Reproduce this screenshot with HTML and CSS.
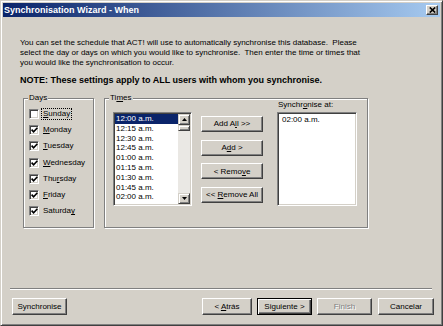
FILE: index.html
```html
<!DOCTYPE html>
<html lang="en">
<head>
    <meta charset="UTF-8" />
    <title>Synchronisation Wizard - When</title>
    <link rel="stylesheet" href="styles.css">
</head>
<body>

    <div class="ventana">
        <div class="barra-titulo">
            <span>Synchronisation Wizard - When</span>
            <span class="cerrar">
                <svg width="7" height="6" viewBox="0 0 7 6"><path d="M0.8 0.5 L6.2 5.5 M6.2 0.5 L0.8 5.5" stroke="#000" stroke-width="1.7"/></svg>
            </span>
        </div>

        <div class="contenido">
            <p class="intro">You can set the schedule that ACT! will use to automatically synchronise this database.&nbsp; Please<br>select the day or days on which you would like to synchronise.&nbsp; Then enter the time or times that<br>you would like the synchronisation to occur.</p>
            <p class="nota">NOTE: These settings apply to ALL users with whom you synchronise.</p>

            <div class="grupos">
                <div class="grupo dias">
                    <span class="titulo-grupo">Days</span>
                    <div class="lista-dias">
                        <div class="dia"><span class="caja"></span><span class="etiqueta foco"><u>S</u>unday</span></div>
                        <div class="dia"><span class="caja"><svg width="7" height="6" viewBox="0 0 7 6"><path d="M0.6 2.6 L2.6 4.8 L6.4 0.8" fill="none" stroke="#000" stroke-width="1.6"/></svg></span><span class="etiqueta"><u>M</u>onday</span></div>
                        <div class="dia"><span class="caja"><svg width="7" height="6" viewBox="0 0 7 6"><path d="M0.6 2.6 L2.6 4.8 L6.4 0.8" fill="none" stroke="#000" stroke-width="1.6"/></svg></span><span class="etiqueta"><u>T</u>uesday</span></div>
                        <div class="dia"><span class="caja"><svg width="7" height="6" viewBox="0 0 7 6"><path d="M0.6 2.6 L2.6 4.8 L6.4 0.8" fill="none" stroke="#000" stroke-width="1.6"/></svg></span><span class="etiqueta"><u>W</u>ednesday</span></div>
                        <div class="dia"><span class="caja"><svg width="7" height="6" viewBox="0 0 7 6"><path d="M0.6 2.6 L2.6 4.8 L6.4 0.8" fill="none" stroke="#000" stroke-width="1.6"/></svg></span><span class="etiqueta">Thu<u>r</u>sday</span></div>
                        <div class="dia"><span class="caja"><svg width="7" height="6" viewBox="0 0 7 6"><path d="M0.6 2.6 L2.6 4.8 L6.4 0.8" fill="none" stroke="#000" stroke-width="1.6"/></svg></span><span class="etiqueta"><u>F</u>riday</span></div>
                        <div class="dia"><span class="caja"><svg width="7" height="6" viewBox="0 0 7 6"><path d="M0.6 2.6 L2.6 4.8 L6.4 0.8" fill="none" stroke="#000" stroke-width="1.6"/></svg></span><span class="etiqueta">Saturda<u>y</u></span></div>
                    </div>
                </div>

                <div class="grupo horas">
                    <span class="titulo-grupo">Ti<u>m</u>es</span>
                    <div class="fila-horas">
                        <div class="hundido lista-horas">
                            <div class="items">
                                <div class="item sel">12:00 a.m.</div>
                                <div class="item">12:15 a.m.</div>
                                <div class="item">12:30 a.m.</div>
                                <div class="item">12:45 a.m.</div>
                                <div class="item">01:00 a.m.</div>
                                <div class="item">01:15 a.m.</div>
                                <div class="item">01:30 a.m.</div>
                                <div class="item">01:45 a.m.</div>
                                <div class="item">02:00 a.m.</div>
                            </div>
                            <div class="scroll">
                                <span class="scroll-btn"><svg width="5" height="3" viewBox="0 0 5 3"><path d="M0 3 L2.5 0 L5 3 Z" fill="#000"/></svg></span>
                                <span class="scroll-pulgar"></span>
                                <span class="scroll-pista"></span>
                                <span class="scroll-btn"><svg width="5" height="3" viewBox="0 0 5 3"><path d="M0 0 L2.5 3 L5 0 Z" fill="#000"/></svg></span>
                            </div>
                        </div>

                        <div class="botones-mover">
                            <button class="boton">Add A<u>l</u>l &gt;&gt;</button>
                            <button class="boton">A<u>d</u>d &gt;</button>
                            <button class="boton">&lt; Remo<u>v</u>e</button>
                            <button class="boton">&lt;&lt; <u>R</u>emove All</button>
                        </div>

                        <div class="sincronizar-en">
                            <span class="etiqueta-lista">Synchr<u>o</u>nise at:</span>
                            <div class="hundido lista-sinc">
                                <div class="item">02:00 a.m.</div>
                            </div>
                        </div>
                    </div>
                </div>
            </div>
        </div>

        <div class="separador"></div>

        <div class="pie">
            <button class="boton">Synchronise</button>
            <button class="boton atras">&lt; <u>A</u>trás</button>
            <button class="boton siguiente">Siguiente &gt;</button>
            <button class="boton finalizar">Finish</button>
            <button class="boton cancelar">Cancelar</button>
        </div>
    </div>

</body>
</html>
```

FILE: styles.css
```css
body {
    margin: 0;
    font-family: "Liberation Sans", Arial, sans-serif;
    font-size: 8px;
    color: #000;
    background-color: #d4d0c8;
}

.ventana {
    width: 443px;
    height: 326px;
    box-sizing: border-box;
    display: flex;
    flex-direction: column;
    padding: 2px;
    background: #d4d0c8;
    border: 1px solid;
    border-color: #d4d0c8 #404040 #404040 #d4d0c8;
    box-shadow: inset 1px 1px 0 #fff, inset -1px -1px 0 #808080;
}

.barra-titulo {
    height: 14px;
    flex-shrink: 0;
    display: flex;
    align-items: center;
    justify-content: space-between;
    padding-left: 1px;
    background: linear-gradient(to right, #0a246a, #a6caf0);
    color: white;
    font-weight: bold;
    font-size: 9px;
}

.cerrar {
    width: 12px;
    height: 10px;
    margin-right: 2px;
    box-sizing: border-box;
    display: flex;
    align-items: center;
    justify-content: center;
    background: #d4d0c8;
    border: 1px solid;
    border-color: #fff #404040 #404040 #fff;
    box-shadow: inset -1px -1px 0 #808080;
}

.contenido {
    flex: 1;
    padding-left: 17px;
}

.intro {
    margin: 20.5px 0 0;
    line-height: 10.3px;
    white-space: nowrap;
}

.nota {
    margin: 6.4px 0 0;
    font-weight: bold;
    font-size: 9px;
    line-height: 10.3px;
}

.grupos {
    display: flex;
    gap: 10px;
    margin: 12.9px 0 0 3px;
}

.grupo {
    box-sizing: border-box;
    height: 130px;
    border: 1px solid #808080;
    box-shadow: inset 1px 1px 0 #fff, 1px 1px 0 #fff;
}

.dias {
    width: 71px;
}

.horas {
    width: 264px;
}

.titulo-grupo {
    display: block;
    width: max-content;
    height: 10px;
    line-height: 10px;
    margin: -6px 0 -4px 4px;
    padding: 0 1px;
    background: #d4d0c8;
}

/* Dias */
.lista-dias {
    padding: 6.9px 0 0 5px;
}

.dia {
    height: 16.25px;
    display: flex;
    align-items: center;
    gap: 3px;
}

.caja {
    width: 10px;
    height: 10px;
    box-sizing: border-box;
    display: flex;
    align-items: center;
    justify-content: center;
    background: #fff;
    border: 1px solid;
    border-color: #808080 #fff #fff #808080;
    box-shadow: inset 1px 1px 0 #404040, inset -1px -1px 0 #d4d0c8;
}

.etiqueta {
    padding: 0 1px;
    line-height: 10px;
}

.etiqueta.foco {
    outline: 1px dotted #000;
}

/* Horas */
.fila-horas {
    display: flex;
    align-items: flex-start;
    padding-left: 8px;
}

.hundido {
    box-sizing: border-box;
    padding: 1px;
    background: #fff;
    border: 1px solid;
    border-color: #808080 #fff #fff #808080;
    box-shadow: inset 1px 1px 0 #404040, inset -1px -1px 0 #d4d0c8;
}

.lista-horas {
    width: 79px;
    height: 94px;
    margin-top: 13px;
    display: flex;
}

.items {
    flex: 1;
}

.item {
    height: 9.8px;
    line-height: 9.8px;
    padding-left: 1px;
    white-space: nowrap;
}

.item.sel {
    background-color: #0a246a;
    color: white;
}

.scroll {
    width: 12px;
    display: flex;
    flex-direction: column;
    background: #eae8e4;
}

.scroll-btn, .scroll-pulgar {
    height: 11px;
    box-sizing: border-box;
    display: flex;
    align-items: center;
    justify-content: center;
    background: #d4d0c8;
    border: 1px solid;
    border-color: #d4d0c8 #404040 #404040 #d4d0c8;
    box-shadow: inset 1px 1px 0 #fff, inset -1px -1px 0 #808080;
}

.scroll-pulgar {
    height: 6px;
}

.scroll-pista {
    flex: 1;
}

.boton {
    box-sizing: border-box;
    height: 16px;
    padding: 0;
    font: inherit;
    color: #000;
    text-align: center;
    white-space: nowrap;
    background: #d4d0c8;
    border: 1px solid;
    border-color: #fff #404040 #404040 #fff;
    box-shadow: inset -1px -1px 0 #808080;
}

.botones-mover {
    width: 62px;
    margin: 17px 0 0 9px;
    display: flex;
    flex-direction: column;
    gap: 7.6px;
}

.sincronizar-en {
    margin: 1px 0 0 14px;
}

.etiqueta-lista {
    display: block;
    line-height: 10px;
    padding-left: 1px;
}

.lista-sinc {
    width: 80px;
    height: 94px;
    margin-top: 2px;
}

.lista-sinc .item {
    padding-left: 3px;
    margin-top: 1px;
}

/* Pie */
.separador {
    border-top: 1px solid #808080;
    border-bottom: 1px solid #fff;
    margin: 0 8px 0 7px;
}

.pie {
    display: flex;
    padding: 8px 6px 8px 9px;
}

.pie .boton {
    height: 17px;
    width: 55px;
}

.pie .atras {
    width: 50px;
    margin-left: auto;
    margin-right: 5px;
}

.pie .siguiente {
    margin-right: 5px;
    border-color: #000;
    box-shadow: inset 1px 1px 0 #fff, inset -1px -1px 0 #404040, inset -2px -2px 0 #808080;
}

.pie .finalizar {
    margin-right: 6px;
    color: #808080;
    text-shadow: 1px 1px 0 #fff;
}

.pie .cancelar {
    width: 56px;
}
```
